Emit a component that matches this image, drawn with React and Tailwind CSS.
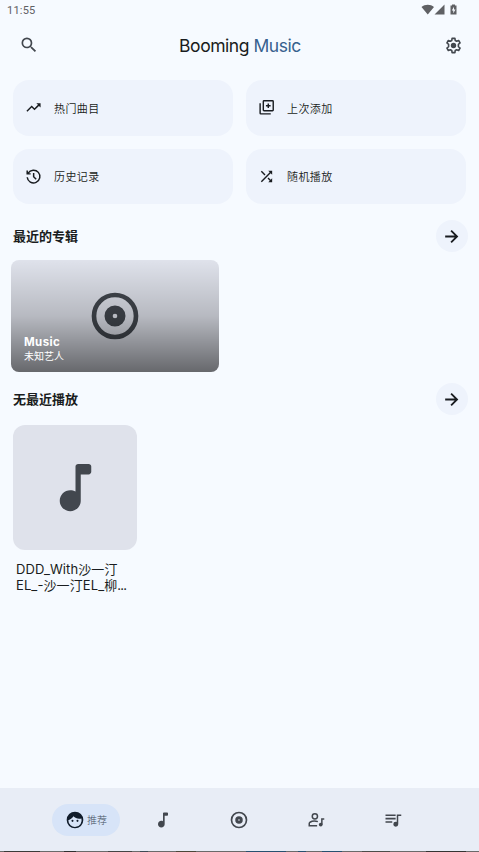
import { MdSearch, MdTrendingUp, MdShuffle } from 'react-icons/md';

const shortcuts = [
  { id: 'top', label: '热门曲目', Icon: MdTrendingUp },
  { id: 'added', label: '上次添加', Icon: LibraryAddIcon },
  { id: 'history', label: '历史记录', Icon: HistoryIcon },
  { id: 'shuffle', label: '随机播放', Icon: MdShuffle },
];

function LibraryAddIcon({ className }) {
  return (
    <svg className={className} viewBox="0 0 24 24" fill="none" stroke="currentColor" strokeWidth={2}>
      <rect x="7.500" y="2.500" width="14" height="14" rx="1" />
      <path d="M3 6v14a1 1 0 001 1h14M14.500 6.200v6.600M11.200 9.500h6.600" />
    </svg>
  );
}

function HistoryIcon({ className }) {
  return (
    <svg className={className} viewBox="0 0 24 24" fill="none" stroke="currentColor" strokeWidth={2.1}>
      <path d="M3.100 13a9 9 0 101.300-5.700M3.100 3.500v4.800H8M12.200 7v5.300l3.600 3.600" />
    </svg>
  );
}

function ArrowIcon({ className }) {
  return (
    <svg className={className} viewBox="0 0 24 24" fill="none" stroke="currentColor" strokeWidth={2.3}>
      <path d="M4 12h15M11.500 4.500L19 12l-7.500 7.500" />
    </svg>
  );
}

function GearIcon({ className }) {
  return (
    <svg className={className} viewBox="0 0 24 24" fill="none" stroke="currentColor">
      <path strokeWidth={2} strokeLinejoin="round"
        d="M10.200 3h3.600l.4 2.700 1.800 1 2.500-1 1.800 3.100-2.100 1.700v3l2.100 1.700-1.800 3.100-2.500-1-1.800 1-.4 2.700h-3.600l-.4-2.700-1.800-1-2.500 1-1.800-3.100 2.100-1.700v-3L3.700 8.800l1.800-3.100 2.500 1 1.800-1z" />
      <circle cx="12" cy="12" r="3.400" fill="currentColor" stroke="none" />
    </svg>
  );
}

function FaceIcon({ className }) {
  return (
    <svg className={className} viewBox="0 0 24 24" fill="currentColor">
      <path fillRule="evenodd"
        d="M12 2a10 10 0 100 20 10 10 0 000-20zM4 12.200C6.800 11.400 8.900 9.700 10.100 7.600c2.400 2.400 5.700 3.300 9.600 2.500A8 8 0 114 12.200z" />
      <circle cx="9" cy="13" r="1.250" />
      <circle cx="15" cy="13" r="1.250" />
    </svg>
  );
}

function DiscIcon({ className }) {
  return (
    <svg className={className} viewBox="0 0 24 24" fill="none" stroke="currentColor">
      <circle cx="12" cy="12" r="9" strokeWidth={2} />
      <circle cx="12" cy="12" r="2.750" strokeWidth={3.5} />
    </svg>
  );
}

function NoteIcon({ className }) {
  return (
    <svg className={className} viewBox="0 0 24 24" fill="currentColor">
      <path d="M10 21c-2.210 0-4-1.790-4-4s1.790-4 4-4c.73 0 1.410.19 2 .54V4c0-.55.45-1 1-1h4c.55 0 1 .45 1 1v2c0 .55-.45 1-1 1h-3v10c0 2.210-1.790 4-4 4z" />
    </svg>
  );
}

function ArtistIcon({ className }) {
  return (
    <svg className={className} viewBox="0 0 24 24" fill="none" stroke="currentColor" strokeWidth={2}>
      <circle cx="10.500" cy="7" r="3.500" />
      <path d="M14.500 14.200c-4-1.500-8-.8-10.500.8-.7.500-1 1-1 1.800V19.500h10.500" />
      <circle cx="18.300" cy="18" r="2.500" fill="currentColor" stroke="none" />
      <path d="M19.800 18v-7.500h3.200" />
    </svg>
  );
}

function QueueIcon({ className }) {
  return (
    <svg className={className} viewBox="0 0 24 24" fill="currentColor">
      <path d="M15.500 4.500H2v2.200h13.500zm0 4.500H2v2.200h13.500zM2 13.500h9v2.200H2zM17 4.500v10.100c-.4-.2-.8-.3-1.300-.3a3.300 3.300 0 103.300 3.300V6.700h4V4.500z" />
    </svg>
  );
}

function StatusBar() {
  return (
    <div className="flex h-5 items-center justify-between pl-[7px] pr-[20px] text-[#5f6064]">
      <span className="pt-px font-['Roboto'] text-[11px] leading-5 tracking-[0.2px]">11:55</span>
      <svg className="h-3 w-[38px]" viewBox="0 0 38 12" fill="currentColor">
        <path d="M0.500 3C4 0 9.500 0 13 3L6.750 10.500zM23.500 .5v10h-10zM29.500 1.500H31V.5h3v1h1.500v9h-6z" />
        <path className="fill-[#f6faff]" d="M33 2.700L30.800 6.500h1.500v2.800L34.500 5.500H33z" />
      </svg>
    </div>
  );
}

function SectionHeader({ title }) {
  return (
    <div className="flex h-8 items-center justify-between pl-[13px] pr-[11px]">
      <h2 className="pt-px text-[13px] font-bold">{title}</h2>
      <button className="flex size-8 items-center justify-center rounded-full bg-[#eef3fc] pr-px">
        <ArrowIcon className="size-[19px]" />
      </button>
    </div>
  );
}

function BottomNav() {
  return (
    <nav className="h-[63px] bg-[#e8edf6] pt-4 text-[#42474e]">
      <div className="flex h-8 items-center pl-[52px]">
        <button className="flex h-8 w-[68px] items-center rounded-full bg-[#d7e4f8] pl-[12.500px]">
          <FaceIcon className="size-5 text-[#101c2b]" />
          <span className="ml-[2.500px] text-[10px] font-light text-[#42505f]">推荐</span>
        </button>
        <button className="ml-[33px]"><NoteIcon className="size-5" /></button>
        <button className="ml-[56px]"><DiscIcon className="size-[20px]" /></button>
        <button className="ml-[58px]"><ArtistIcon className="size-[18px]" /></button>
        <button className="ml-[59px]"><QueueIcon className="size-[18px]" /></button>
      </div>
    </nav>
  );
}

// sliver of the wallpaper that shows under the nav bar
function BottomEdge() {
  return (
    <div className="flex h-px bg-[#6a6a6a]">
      <div className="ml-1 w-9 bg-[#3b3a38]" />
      <div className="ml-6 w-3 bg-[#2f2f2f]" />
      <div className="ml-8 w-6 bg-[#444444]" />
      <div className="ml-2 w-2 bg-[#3d4a54]" />
      <div className="ml-7 w-5 bg-[#4b4638]" />
      <div className="ml-[50px] w-10 bg-[#27506f]" />
      <div className="ml-3 w-2 bg-[#27506f]" />
      <div className="ml-4 w-5 bg-[#27506f]" />
      <div className="ml-5 w-7 bg-[#4c4c49]" />
      <div className="ml-9 w-10 bg-[#353433]" />
    </div>
  );
}

export default function App() {
  return (
    <div className="flex h-[852px] w-[479px] flex-col overflow-hidden bg-[#f6faff] font-['Inter','Noto_Sans_CJK_SC',sans-serif] text-[#191c20]">
      <StatusBar />

      <header className="flex h-[50px] items-center justify-between pl-[19px] pr-[16px]">
        <MdSearch className="size-[20px] text-[#42474e]" />
        <h1 className="pr-[3px] pt-0.5 text-[17.500px] tracking-[-0.45px]">
          Booming <span className="text-[#36618e]">Music</span>
        </h1>
        <GearIcon className="size-[19px] text-[#42474e]" />
      </header>

      <div className="mt-[10px] grid grid-cols-2 gap-[13px] px-[13px]">
        {shortcuts.map(({ id, label, Icon }) => (
          <button key={id}
            className="flex h-[55.700px] items-center rounded-2xl bg-[#eef3fc] pl-[12px] text-[11px] font-[350] tracking-[0.4px]">
            <Icon className="size-[17px]" />
            <span className="ml-3 pt-0.5">{label}</span>
          </button>
        ))}
      </div>

      <section className="mt-4">
        <SectionHeader title="最近的专辑" />
        <div className="relative ml-[11px] mt-2 flex h-[112px] w-[208px] items-center justify-center overflow-hidden rounded-lg bg-[#dfe2eb]">
          <DiscIcon className="size-[56px] text-[#42474e]" />
          <div className="absolute inset-0 flex flex-col justify-end bg-linear-to-b/srgb from-black/0 via-black/18 to-black/54 pb-[9px] pl-[13px] text-white">
            <p className="text-[11.500px] font-bold leading-[14px] tracking-[0.4px]">Music</p>
            <p className="text-[10px] leading-[14px]">未知艺人</p>
          </div>
        </div>
      </section>

      <section className="mt-[11px]">
        <SectionHeader title="无最近播放" />
        <div className="ml-[13px] mt-[10px] w-[124px]">
          <div className="flex h-[124.500px] w-[124px] items-center justify-center rounded-xl bg-[#dfe2eb] text-[#42474e]">
            <NoteIcon className="size-[63px]" />
          </div>
          <p className="mt-[11.500px] whitespace-nowrap pl-[3px] text-[13px] leading-4 tracking-[0.1px]">
            DDD_With沙一汀<br />EL_-沙一汀EL_柳<span className="tracking-[-0.8px]">...</span>
          </p>
        </div>
      </section>

      <div className="flex-1" />
      <BottomNav />
      <BottomEdge />
    </div>
  );
}
